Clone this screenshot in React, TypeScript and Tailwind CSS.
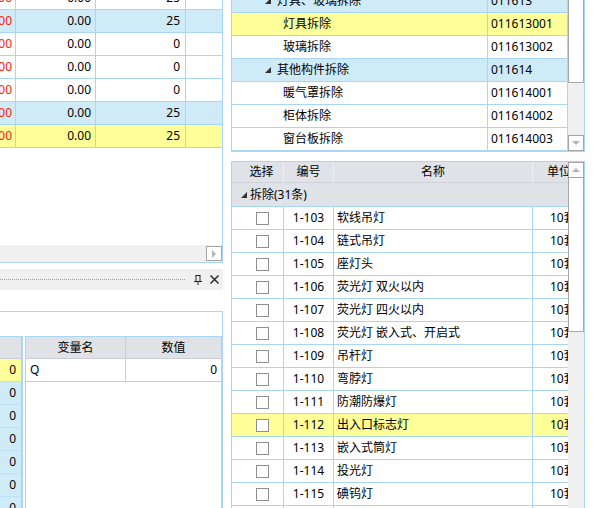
import React from 'react'

type Tone = 'white' | 'blue' | 'yellow'

const toneBg: Record<Tone, string> = {
  white: 'bg-white',
  blue: 'bg-[#d0ebf8]',
  yellow: 'bg-[#ffff99]',
}

const LINE = 'border-[#a8d6f4]'

const topLeftRows: { tone: Tone; qty: string }[] = [
  { tone: 'white', qty: '25' },
  { tone: 'blue', qty: '25' },
  { tone: 'white', qty: '0' },
  { tone: 'white', qty: '0' },
  { tone: 'white', qty: '0' },
  { tone: 'blue', qty: '25' },
  { tone: 'yellow', qty: '25' },
]

const treeRows: { tone: Tone; name: string; code: string; parent?: boolean }[] = [
  { tone: 'blue', name: '灯具、玻璃拆除', code: '011613', parent: true },
  { tone: 'yellow', name: '灯具拆除', code: '011613001' },
  { tone: 'white', name: '玻璃拆除', code: '011613002' },
  { tone: 'blue', name: '其他构件拆除', code: '011614', parent: true },
  { tone: 'white', name: '暖气罩拆除', code: '011614001' },
  { tone: 'white', name: '柜体拆除', code: '011614002' },
  { tone: 'white', name: '窗台板拆除', code: '011614003' },
]

const quotaRows: { code: string; name: string }[] = [
  { code: '1-103', name: '软线吊灯' },
  { code: '1-104', name: '链式吊灯' },
  { code: '1-105', name: '座灯头' },
  { code: '1-106', name: '荧光灯 双火以内' },
  { code: '1-107', name: '荧光灯 四火以内' },
  { code: '1-108', name: '荧光灯 嵌入式、开启式' },
  { code: '1-109', name: '吊杆灯' },
  { code: '1-110', name: '弯脖灯' },
  { code: '1-111', name: '防潮防爆灯' },
  { code: '1-112', name: '出入口标志灯' },
  { code: '1-113', name: '嵌入式筒灯' },
  { code: '1-114', name: '投光灯' },
  { code: '1-115', name: '碘钨灯' },
  { code: '1-116', name: '吸顶灯' },
]

function Expander() {
  return (
    <svg width="6" height="6" viewBox="0 0 6 6" className="shrink-0">
      <polygon points="6,0 6,6 0,6" fill="#333" />
    </svg>
  )
}

function Arrow({ dir }: { dir: 'up' | 'down' | 'right' }) {
  const pts = dir === 'up' ? '0,4 4,0 8,4' : dir === 'down' ? '0,0 8,0 4,4' : '0,0 4,4 0,8'
  const w = dir === 'right' ? 4 : 8
  const h = dir === 'right' ? 8 : 4
  return (
    <svg width={w} height={h} viewBox={`0 0 ${w} ${h}`}>
      <polygon points={pts} fill="#b4b4b4" />
    </svg>
  )
}

function ScrollButton({ dir }: { dir: 'up' | 'down' | 'right' }) {
  return (
    <div className="flex items-center justify-center w-[16px] h-[16px] border border-[#a6a6a6] bg-white shrink-0">
      <Arrow dir={dir} />
    </div>
  )
}

export default function App() {
  return (
    <div className="w-[593px] h-[508px] overflow-hidden bg-white flex text-[12px] text-black font-['Noto_Sans','Noto_Sans_CJK_SC',sans-serif] leading-none">
      {/* ---- left column ---- */}
      <div className="w-[223px] shrink-0 flex flex-col">
        {/* upper grid */}
        <div className={`h-[263px] shrink-0 flex flex-col border-r border-b ${LINE}`}>
          <div className="flex-1 overflow-hidden">
            <div className="-mt-[13px]">
              {topLeftRows.map((r, i) => (
                <div key={i} className={`flex h-[23px] border-b ${LINE} ${toneBg[r.tone]}`}>
                  <div className={`w-[16px] flex items-center justify-end overflow-hidden pr-[3px] border-r ${LINE} text-[#ff2000]`}>
                    <span className="whitespace-nowrap">0.00</span>
                  </div>
                  <div className={`w-[80px] flex items-center justify-end pr-[4px] border-r ${LINE}`}>0.00</div>
                  <div className={`w-[90px] flex items-center justify-end pr-[5px] border-r ${LINE}`}>{r.qty}</div>
                  <div className="flex-1" />
                </div>
              ))}
            </div>
          </div>
          <div className="h-[17px] bg-[#f0f0f0] flex items-center justify-end">
            <div className="flex items-center justify-center w-[16px] h-[15px] border border-[#a6a6a6] bg-white">
              <Arrow dir="right" />
            </div>
          </div>
        </div>

        {/* dock bar */}
        <div className="mt-[6px] h-[21px] shrink-0 bg-[#f0f0f0] flex items-center">
          <div className="w-[185px] border-t border-dotted border-[#a0a0a0]" />
          <svg width="8" height="10" viewBox="0 0 8 10" className="ml-[9px]">
            <path d="M1.5 0.5h5M2 0.5v6M6 0.5v6M0 6.5h8M4 6.5v3.5" stroke="#222" strokeWidth="1" fill="none" />
          </svg>
          <svg width="9" height="9" viewBox="0 0 9 9" className="ml-[8px]">
            <path d="M0.5 0.5l8 8M8.5 0.5l-8 8" stroke="#222" strokeWidth="1.4" />
          </svg>
        </div>

        {/* lower box */}
        <div className={`mt-[21px] flex-1 flex flex-col border-t border-r ${LINE}`}>
          <div className="h-[24px] shrink-0" />
          <div className="flex flex-1">
            <div className={`w-[23px] border-t border-r-2 ${LINE}`}>
              <div className="h-[22px] bg-[#dfe2e7] border-b border-[#c9ced6]" />
              {[0, 1, 2, 3, 4, 5, 6].map((i) => (
                <div
                  key={i}
                  className={`h-[23px] flex items-center justify-end pr-[5px] border-b border-[#bfe0f4] ${i === 0 ? toneBg.yellow : toneBg.blue}`}
                >
                  0
                </div>
              ))}
            </div>
            <div className={`ml-[2px] flex-1 border-t border-l border-r ${LINE}`}>
              <div className="flex h-[22px] bg-[#dfe2e7] border-b border-[#c9ced6]">
                <div className="w-[100px] flex items-center justify-center border-r border-[#c9ced6]">变量名</div>
                <div className="flex-1 flex items-center justify-center">数值</div>
              </div>
              <div className={`flex h-[23px] border-b ${LINE}`}>
                <div className={`w-[100px] flex items-center pl-[4px] border-r ${LINE}`}>Q</div>
                <div className="flex-1 flex items-center justify-end pr-[4px]">0</div>
              </div>
            </div>
          </div>
        </div>
      </div>

      {/* ---- right column ---- */}
      <div className="ml-[8px] w-[354px] shrink-0 flex flex-col">
        {/* bill tree */}
        <div className={`h-[152px] shrink-0 flex border-l border-r border-b ${LINE}`}>
          <div className="w-[336px] overflow-hidden">
            <div className="-mt-[10px]">
              {treeRows.map((r, i) => (
                <div key={i} className={`flex h-[23px] border-b ${LINE} ${toneBg[r.tone]}`}>
                  <div
                    className={`w-[256px] flex items-center border-r ${LINE} ${r.parent ? 'pl-[33px] gap-[6px]' : 'pl-[51px]'}`}
                  >
                    {r.parent && <Expander />}
                    <span>{r.name}</span>
                  </div>
                  <div className={`w-[80px] flex items-center pl-[3px] border-r ${LINE}`}>{r.code}</div>
                </div>
              ))}
            </div>
          </div>
          <div className="w-[16px] bg-[#f0f0f0] flex flex-col">
            <div className="h-[83px] border-x border-b border-[#a6a6a6] bg-white" />
            <div className="flex-1" />
            <ScrollButton dir="down" />
          </div>
        </div>

        {/* quota list */}
        <div className={`mt-[9px] flex-1 flex border-t border-l border-r ${LINE}`}>
          <div className="w-[336px] overflow-hidden">
            <div className="w-[353px]">
              <div className="flex h-[21px] bg-[#dfe2e7] border-b border-[#cfd3d9]">
                <div className="w-[52px] flex items-center justify-center pl-[8px] border-r border-[#eef0f3]">选择</div>
                <div className="w-[50px] flex items-center justify-center border-r border-[#eef0f3]">编号</div>
                <div className="w-[199px] flex items-center justify-center border-r border-[#eef0f3]">名称</div>
                <div className="w-[52px] flex items-center justify-center">单位</div>
              </div>
              <div className={`flex items-center h-[24px] bg-[#dfe2e7] border-b ${LINE} pl-[9px] gap-[3px]`}>
                <Expander />
                <span>拆除(31条)</span>
              </div>
              {quotaRows.map((r) => (
                <div
                  key={r.code}
                  className={`flex h-[23px] border-b ${LINE} ${r.code === '1-112' ? toneBg.yellow : toneBg.white}`}
                >
                  <div className={`w-[52px] flex items-center justify-center pl-[9px] border-r ${LINE}`}>
                    <div className="w-[13px] h-[13px] border border-[#8f8f8f] bg-white" />
                  </div>
                  <div className={`w-[50px] flex items-center justify-center border-r ${LINE}`}>{r.code}</div>
                  <div className={`w-[199px] flex items-center pl-[3px] border-r ${LINE}`}>{r.name}</div>
                  <div className="w-[52px] flex items-center pl-[17px] whitespace-nowrap">10套</div>
                </div>
              ))}
            </div>
          </div>
          <div className="w-[16px] bg-[#f0f0f0] flex flex-col">
            <ScrollButton dir="up" />
            <div className="h-[154px] border border-t-0 border-[#a6a6a6] bg-white" />
          </div>
        </div>
      </div>
    </div>
  )
}
